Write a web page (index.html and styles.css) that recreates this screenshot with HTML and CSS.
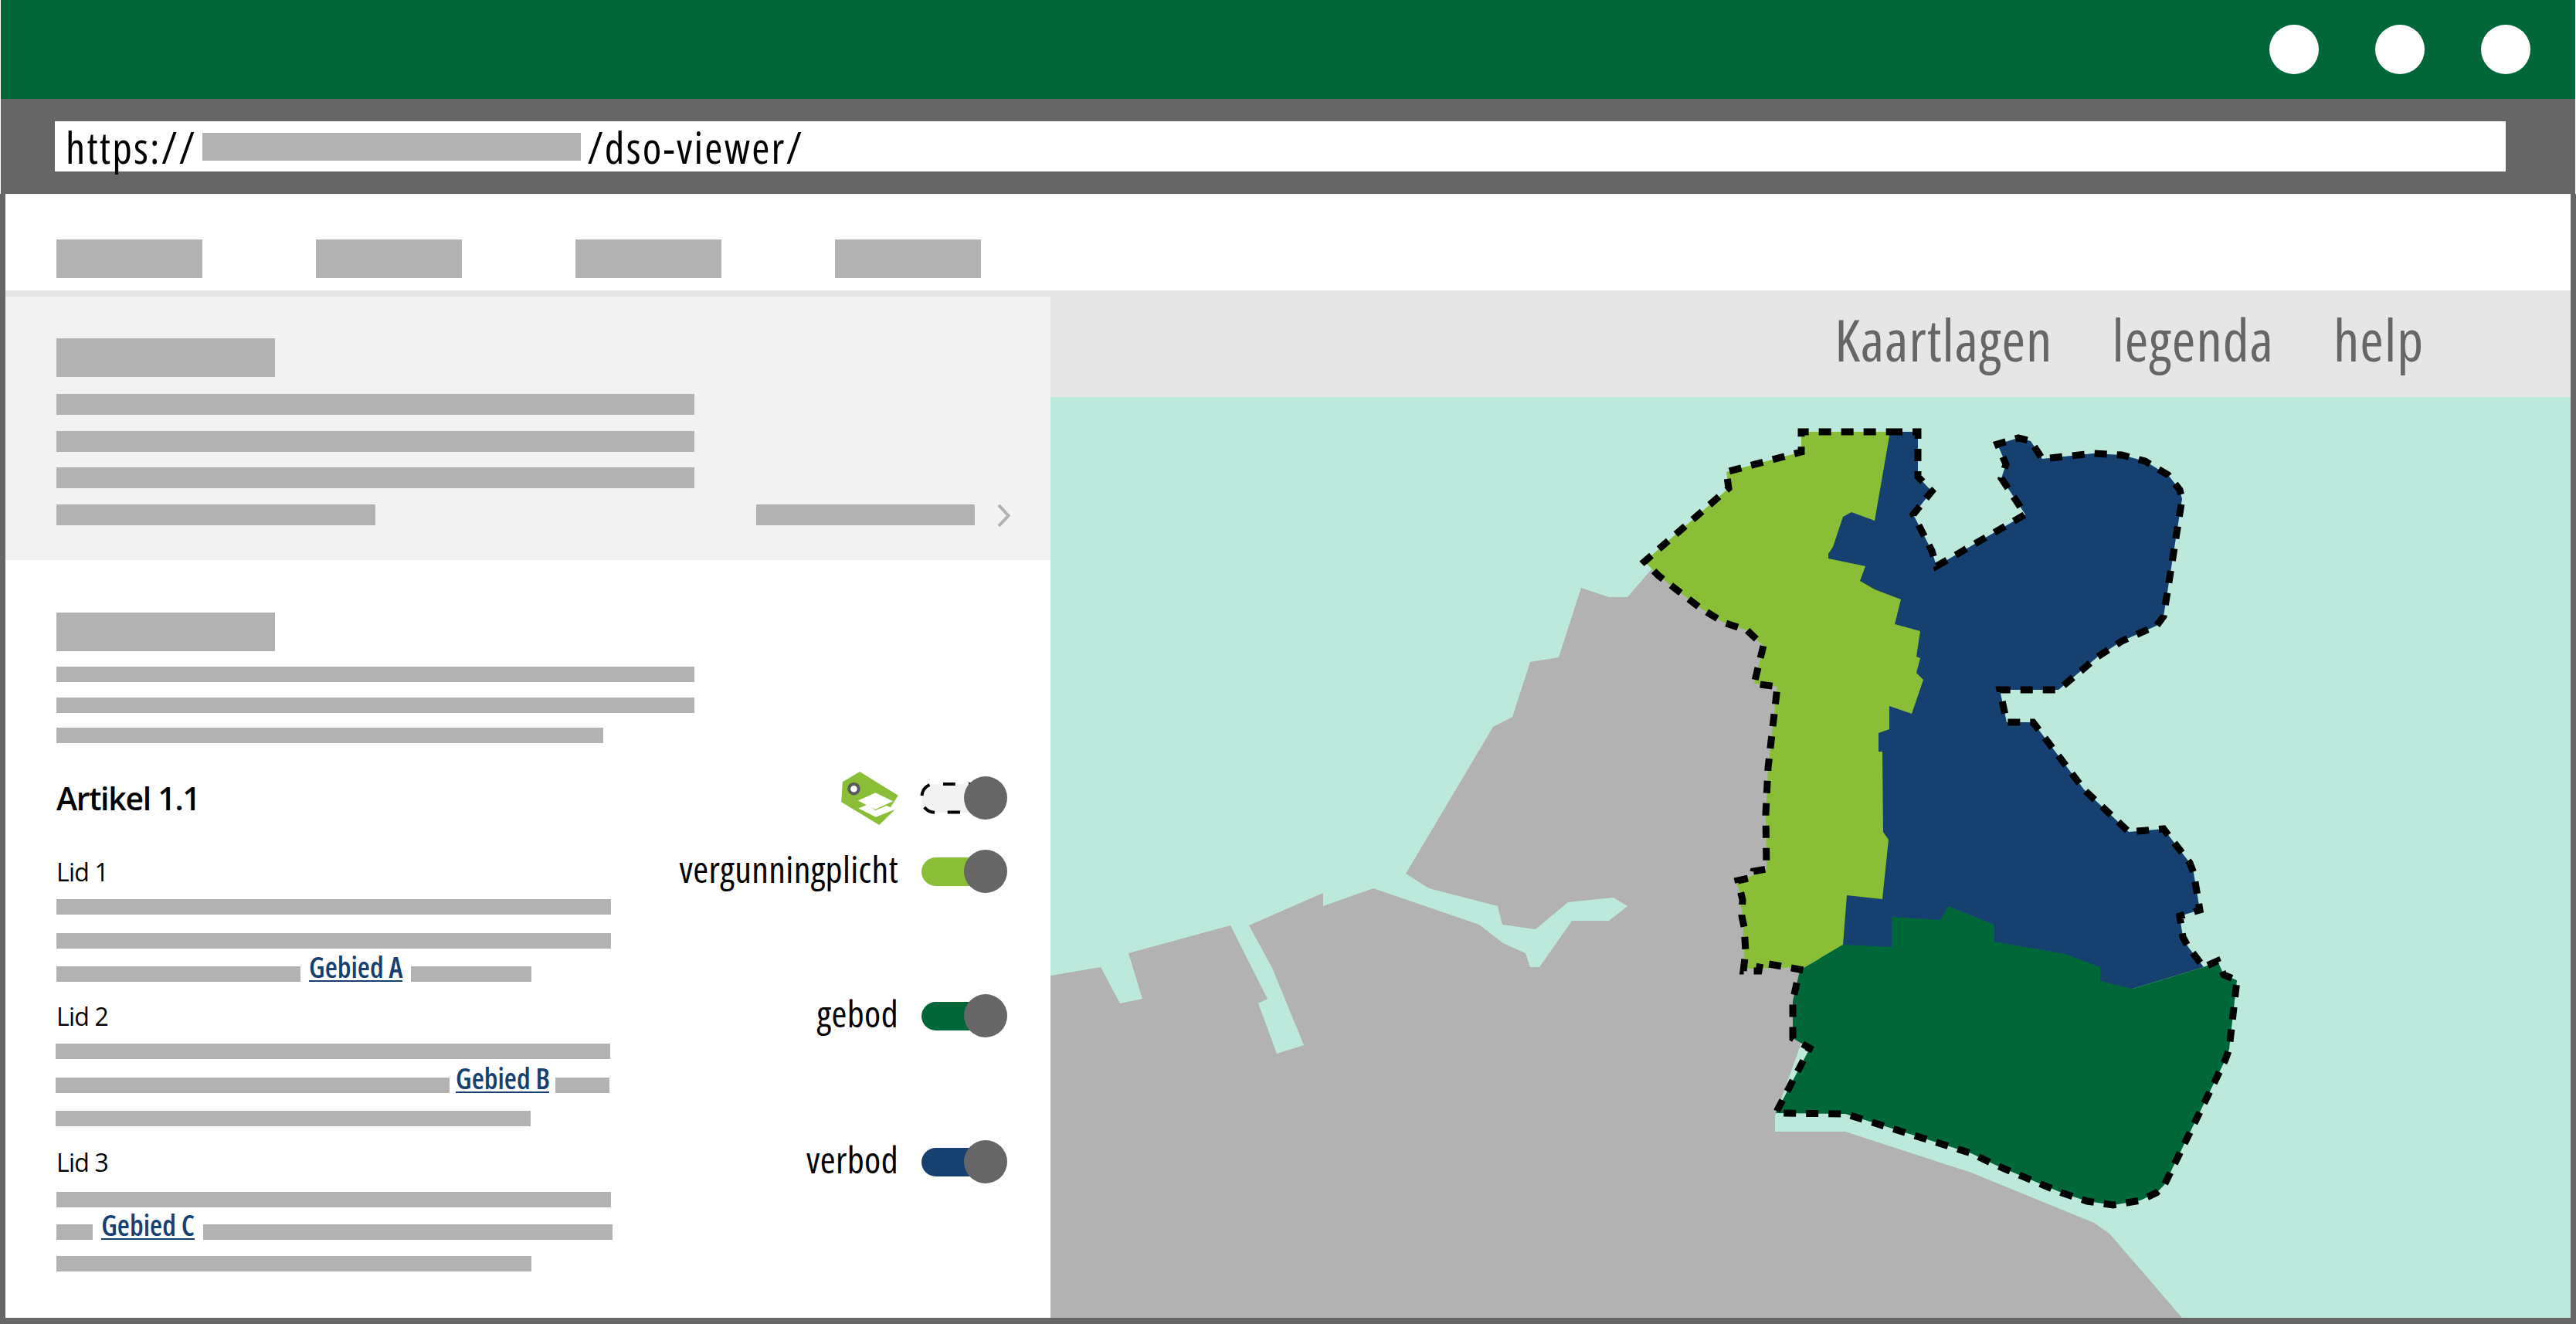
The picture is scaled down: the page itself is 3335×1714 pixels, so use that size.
FILE: index.html
```html
<!DOCTYPE html>
<html lang="nl">
<head>
  <meta charset="UTF-8">
  <title>DSO viewer</title>
  <link rel="stylesheet" href="styles.css">
</head>
<body>
<div class="window">
  <div class="titlebar">
    <span class="dot"></span>
    <span class="dot"></span>
    <span class="dot"></span>
  </div>
  <div class="addressbar">
    <div class="url">
      <span>https://</span>
      <span class="url-mask"></span>
      <span>/dso-viewer/</span>
    </div>
  </div>
  <div class="content">
    <div class="site-nav">
      <span class="bar nav-item"></span>
      <span class="bar nav-item"></span>
      <span class="bar nav-item"></span>
      <span class="bar nav-item"></span>
    </div>
    <div class="main">
      <div class="sidebar">
        <div class="intro">
          <div class="bar block-title"></div>
          <div class="bar intro-line"></div>
          <div class="bar intro-line"></div>
          <div class="bar intro-line"></div>
          <div class="intro-last">
            <span class="bar intro-short"></span>
            <span class="intro-more">
              <span class="bar intro-link"></span>
              <svg class="chevron" viewBox="0 0 18 29"><path d="M3 1 L15.500 14.500 L3 28"/></svg>
            </span>
          </div>
        </div>
        <div class="article">
          <div class="bar block-title"></div>
          <div class="summary">
            <div class="bar line-full"></div>
            <div class="bar line-full"></div>
            <div class="bar line-summary"></div>
          </div>
          <div class="article-head">
            <h2 class="article-title">Artikel 1.1</h2>
            <span class="rule">
              <svg class="tag" viewBox="150 85 222 208">
                <path fill="#8abe37" d="M155 125 L222 85 L372 178 L331 241 L360 232 L298 293 L150 203 Z"/>
                <circle cx="199" cy="152" r="19" fill="#fff" stroke="#58595b" stroke-width="12"/>
                <path fill="#fff" d="M215 198 L283 167 L352 200 L283 232 Z"/>
                <path fill="#fff" d="M217 228 L252 213 L283 236 L327 218 L360 232 L285 262 Z"/>
              </svg>
              <span class="toggle toggle-open">
                <svg class="toggle-dash" viewBox="0 0 72 56">
                  <path d="M10.500 11 A17 17 0 0 0 0.500 25 M3.700 40 A17 17 0 0 0 17 46.700 M28 10 H43.700 M61 10 H70 M33.700 46.500 H50"/>
                </svg>
              </span>
            </span>
          </div>

          <section class="lid">
            <div class="lid-head">
              <span class="lid-title">Lid 1</span>
              <span class="rule">
                <span class="rule-label">vergunningplicht</span>
                <span class="toggle toggle-light"></span>
              </span>
            </div>
            <div class="lid-lines">
              <div class="bar line-wide"></div>
              <div class="bar line-wide"></div>
              <div class="line-row">
                <span class="bar w-316"></span>
                <a class="area-link" href="#">Gebied A</a>
                <span class="bar w-156"></span>
              </div>
            </div>
          </section>

          <section class="lid lid-second">
            <div class="lid-head">
              <span class="lid-title">Lid 2</span>
              <span class="rule">
                <span class="rule-label">gebod</span>
                <span class="toggle toggle-green"></span>
              </span>
            </div>
            <div class="lid-lines lid-lines-shift">
              <div class="bar line-wide"></div>
              <div class="line-row line-row-snug">
                <span class="bar w-510"></span>
                <a class="area-link" href="#">Gebied B</a>
                <span class="bar w-70"></span>
              </div>
              <div class="bar line-end"></div>
            </div>
          </section>

          <section class="lid lid-third">
            <div class="lid-head">
              <span class="lid-title">Lid 3</span>
              <span class="rule">
                <span class="rule-label">verbod</span>
                <span class="toggle toggle-blue"></span>
              </span>
            </div>
            <div class="lid-lines lid-lines-tight">
              <div class="bar line-wide"></div>
              <div class="line-row">
                <span class="bar w-47"></span>
                <a class="area-link" href="#">Gebied C</a>
                <span class="bar w-530"></span>
              </div>
              <div class="bar line-end"></div>
            </div>
          </section>
        </div>
      </div>
      <div class="viewer">
        <div class="viewer-tools">
          <a href="#">Kaartlagen</a>
          <a href="#">legenda</a>
          <a href="#">help</a>
        </div>
        <svg class="map" viewBox="1360 514 1968 1192">
          <path class="land" d="M1360 1263 L1425 1252 L1450 1299 L1479 1293 L1461 1234 L1593 1198 L1641 1293 L1629 1299 L1653 1364 L1688 1353 L1647 1253 L1617 1198 L1713 1156 L1713 1173 L1778 1150 L1915 1197 L1946 1221 L1975 1234 L1981 1252 L1993 1252 L2035 1192 L2083 1192 L2107 1173 L2089 1162 L2030 1168 L1988 1203 L1945 1197 L1939 1173 L1850 1150 L1820 1131 L1933 941 L1958 928 L1981 857 L2018 851 L2047 761 L2083 773 L2107 773 L2138 737 L2300 800 L2350 1300 L2298 1445 L2298 1465 L2389 1465 L2552 1518 L2711 1583 L2731 1597 L2825 1706 L1360 1706 Z"/>
          <path class="area-blue" d="M2447 559 L2483 559 L2483 617 L2501 636 L2477 666 L2501 713 L2507 733 L2622 666 L2591 619 L2597 601 L2586 575 L2613 567 L2629 571 L2644 594 L2710 587 L2747 589 L2777 597 L2807 615 L2822 634 L2825 646 L2801 798 L2792 810 L2747 830 L2716 850 L2665 893 L2589 893 L2598 935 L2632 935 L2698 1022 L2756 1077 L2801 1073 L2835 1117 L2840 1130 L2848 1178 L2822 1186 L2826 1213 L2833 1226 L2853 1252 L2761 1280 L2600 1300 L2350 1240 L2350 700 Z"/>
          <path class="area-light" d="M2332 559 L2447 559 L2427 674 L2397 663 L2386 669 L2373 708 L2367 717 L2367 723 L2415 733 L2408 752 L2427 763 L2461 776 L2453 808 L2486 817 L2481 850 L2486 852 L2481 871 L2490 880 L2475 924 L2446 914 L2446 944 L2432 949 L2432 973 L2437 973 L2438 1077 L2445 1087 L2437 1164 L2391 1159 L2386 1223 L2337 1252 L2264 1254 L2259 1252 L2256 1186 L2251 1150 L2248 1143 L2287 1125 L2286 1054 L2289 994 L2301 889 L2271 885 L2283 836 L2262 816 L2232 806 L2201 787 L2147 745 L2129 727 L2238 632 L2235 611 L2332 585 Z"/>
          <path class="area-green" d="M2337 1252 L2386 1223 L2449 1226 L2449 1187 L2512 1191 L2522 1173 L2582 1197 L2582 1219 L2674 1235 L2719 1252 L2719 1270 L2761 1280 L2853 1252 L2871 1244 L2879 1262 L2896 1269 L2886 1358 L2881 1372 L2802 1534 L2792 1544 L2771 1554 L2736 1560 L2702 1555 L2669 1544 L2583 1508 L2552 1493 L2389 1442 L2299 1441 L2343 1357 L2321 1344 L2321 1296 L2330 1257 Z"/>
          <path class="boundary" d="M2447 559 L2483 559 L2483 617 L2501 636 L2477 666 L2501 713 L2507 733 L2622 666 L2591 619 L2597 601 L2586 575 L2613 567 L2629 571 L2644 594 L2710 587 L2747 589 L2777 597 L2807 615 L2822 634 L2825 646 L2801 798 L2792 810 L2747 830 L2716 850 L2665 893 L2589 893 L2598 935 L2632 935 L2698 1022 L2756 1077 L2801 1073 L2835 1117 L2840 1130 L2848 1178 L2822 1186 L2826 1213 L2833 1226 L2853 1252 L2871 1244 L2879 1262 L2896 1269 L2886 1358 L2881 1372 L2802 1534 L2792 1544 L2771 1554 L2736 1560 L2702 1555 L2669 1544 L2583 1508 L2552 1493 L2389 1442 L2299 1441 L2343 1357 L2321 1344 L2321 1296 L2330 1255 L2279 1246 L2277 1257 L2257 1257 L2260 1232 L2258 1200 L2255 1186 L2256 1165 L2250 1140 L2268 1136 L2270 1128 L2287 1125 L2286 1054 L2289 994 L2301 889 L2271 885 L2283 836 L2262 816 L2232 806 L2201 787 L2147 745 L2129 727 L2238 632 L2235 611 L2332 585 L2332 559 Z"/>
        </svg>
      </div>
    </div>
  </div>
</div>
</body>
</html>
```

FILE: styles.css
```css
* {
  box-sizing: border-box;
}

body {
  margin: 0;
  background: white;
  font-family: "Open Sans", "Liberation Sans", sans-serif;
  font-stretch: 75%;
}

a {
  text-decoration: none;
}

.window {
  width: 3335px;
  height: 1714px;
  display: flex;
  flex-direction: column;
  overflow: hidden;
}

.bar {
  display: block;
  background: #b2b2b2;
}

/* browser chrome */
.titlebar {
  height: 128px;
  margin: 0 1px;
  padding-right: 58px;
  display: flex;
  align-items: center;
  justify-content: flex-end;
  gap: 73px;
  background: #006838;
}

.dot {
  width: 64px;
  height: 64px;
  border-radius: 50%;
  background: white;
}

.addressbar {
  height: 123px;
  margin: 0 1px;
  padding: 29px 90px 29px 70px;
  background: #666666;
}

.url {
  height: 65px;
  padding-left: 14px;
  display: flex;
  align-items: center;
  gap: 8px;
  background: white;
  color: black;
  font-size: 56px;
  letter-spacing: 2.200px;
}

.url-mask {
  width: 490px;
  height: 36px;
  background: #b2b2b2;
}

/* page */
.content {
  flex: 1;
  display: flex;
  flex-direction: column;
  border: 7px solid #666666;
  border-width: 0 7px 8px;
  min-height: 0;
}

.site-nav {
  height: 125px;
  padding: 59px 0 0 66px;
  display: flex;
  align-items: flex-start;
  gap: 147px;
  background: white;
}

.nav-item {
  width: 189px;
  height: 50px;
}

.main {
  flex: 1;
  display: flex;
  background: #e6e6e6;
  min-height: 0;
}

.sidebar {
  width: 1353px;
  padding-top: 8px;
  display: flex;
  flex-direction: column;
}

.intro {
  height: 341px;
  padding: 54px 0 0 66px;
  background: #f2f2f2;
}

.block-title {
  width: 283px;
  height: 50px;
}

.intro-line {
  width: 826px;
  height: 27px;
  margin-top: 20.500px;
}

.intro .block-title + .intro-line {
  margin-top: 22px;
}

.intro-last {
  width: 1235px;
  margin-top: 20.500px;
  display: flex;
  justify-content: space-between;
}

.intro-short {
  width: 413px;
  height: 27px;
}

.intro-more {
  display: flex;
  gap: 28px;
}

.intro-link {
  width: 283px;
  height: 27px;
}

.chevron {
  width: 18px;
  height: 29px;
  fill: none;
  stroke: #b2b2b2;
  stroke-width: 4;
}

.article {
  flex: 1;
  padding: 68px 0 0 66px;
  background: white;
}

.summary {
  margin-top: 20px;
  display: flex;
  flex-direction: column;
  gap: 19.500px;
}

.line-full {
  width: 826px;
  height: 20px;
}

.line-summary {
  width: 708px;
  height: 20px;
}

.article-head,
.lid-head {
  width: 1231px;
  height: 56px;
  display: flex;
  align-items: center;
  justify-content: space-between;
}

.article-head {
  margin-top: 43px;
}

.article-title {
  margin: 0;
  font-size: 41px;
  font-weight: 600;
  font-stretch: 100%;
  letter-spacing: -1.300px;
  color: black;
}

.rule {
  display: flex;
  align-items: center;
  gap: 30px;
}

.rule-label {
  margin-bottom: 8px;
  font-size: 48px;
  letter-spacing: 0.400px;
  color: black;
}

.tag {
  width: 74px;
  height: 69px;
}

.toggle {
  position: relative;
  width: 111px;
  height: 56px;
  display: flex;
  align-items: center;
}

.toggle::before {
  content: "";
  width: 80px;
  height: 37px;
  border-radius: 19px 0 0 19px;
}

.toggle::after {
  content: "";
  position: relative;
  z-index: 1;
  width: 56px;
  height: 56px;
  margin-left: -25px;
  border-radius: 50%;
  background: #666666;
}

.toggle-open::before {
  background: #f2f2f2;
}

.toggle-light::before {
  background: #8abe37;
}

.toggle-green::before {
  background: #006838;
}

.toggle-blue::before {
  background: #164070;
}

.toggle-dash {
  position: absolute;
  left: 0;
  top: 0;
  width: 72px;
  height: 56px;
  fill: none;
  stroke: black;
  stroke-width: 4;
  overflow: visible;
}

.lid {
  margin-top: 39px;
}

.lid-second {
  margin-top: 16px;
}

.lid-third {
  margin-top: 18px;
}

.lid-title {
  font-size: 32px;
  font-stretch: 100%;
  letter-spacing: -0.800px;
  color: black;
}

.lid-lines {
  margin-top: 8px;
  display: flex;
  flex-direction: column;
  gap: 23.500px;
}

.lid-lines-shift {
  margin-left: -1px;
}

.lid-lines-tight {
  margin-top: 11px;
  gap: 21.500px;
}

.line-wide {
  width: 718px;
  height: 20px;
}

.line-end {
  width: 615px;
  height: 20px;
}

.line-row {
  width: 718px;
  height: 20px;
  display: flex;
  align-items: flex-end;
  gap: 11px;
}

.line-row-snug {
  gap: 8px;
}

.line-row .bar {
  height: 20px;
  flex: none;
}

.w-47 {
  width: 47px;
}

.w-70 {
  width: 70px;
}

.w-156 {
  width: 156px;
}

.w-316 {
  width: 316px;
}

.w-510 {
  width: 510px;
}

.w-530 {
  width: 530px;
}

.area-link {
  flex: none;
  width: 121px;
  border-bottom: 2px solid #164070;
  color: #164070;
  font-size: 37px;
  font-weight: 600;
  line-height: 34px;
  text-align: center;
  white-space: nowrap;
}

/* map */
.viewer {
  flex: 1;
  display: flex;
  flex-direction: column;
  min-width: 0;
}

.viewer-tools {
  height: 138px;
  padding: 0 190px 12px 0;
  display: flex;
  align-items: center;
  justify-content: flex-end;
  gap: 77px;
  font-size: 74px;
  letter-spacing: 1px;
}

.viewer-tools a {
  color: #666666;
}

.map {
  display: block;
  width: 1968px;
  height: 1192px;
  background: #bde9dc;
}

.land {
  fill: #b2b2b2;
}

.area-blue {
  fill: #164070;
}

.area-light {
  fill: #8abe37;
}

.area-green {
  fill: #006838;
}

.boundary {
  fill: none;
  stroke: black;
  stroke-width: 9;
  stroke-dasharray: 16 13;
}
```
